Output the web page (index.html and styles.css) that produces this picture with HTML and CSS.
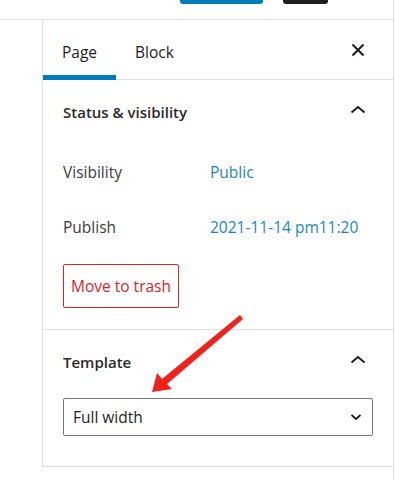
FILE: index.html
```html
<!DOCTYPE html>
<html lang="en">
<head>
  <meta charset="UTF-8">
  <meta name="viewport" content="width=device-width, initial-scale=1.0">
  <title>Page settings</title>
  <link rel="stylesheet" href="styles.css">
</head>
<body>

  <div class="page">
    <header class="topbar">
      <span class="top-btn primary"></span>
      <span class="top-btn dark"></span>
    </header>

    <div class="main">
      <div class="gutter"></div>

      <aside class="sidebar">
        <div class="tabs">
          <button class="tab active">Page</button>
          <button class="tab">Block</button>
          <button class="icon-btn close" aria-label="Close settings">
            <svg width="14" height="14" viewBox="0 0 14 14">
              <path d="M1.5 1.5 L12.5 12.5 M12.5 1.5 L1.5 12.5" stroke="#1e1e1e" stroke-width="2" fill="none"/>
            </svg>
          </button>
        </div>

        <section class="panel">
          <div class="panel-head">
            <h2>Status &amp; visibility</h2>
            <span class="chevron">
              <svg width="16" height="10" viewBox="0 0 16 10">
                <path d="M1.5 7.5 L8 2 L14.5 7.5" stroke="#1e1e1e" stroke-width="2" fill="none"/>
              </svg>
            </span>
          </div>
          <div class="panel-body status-body">
            <div class="row">
              <span class="row-label">Visibility</span>
              <a class="row-value" href="#">Public</a>
            </div>
            <div class="row">
              <span class="row-label">Publish</span>
              <a class="row-value" href="#">2021-11-14 pm11:20</a>
            </div>
            <button class="trash-btn">Move to trash</button>
          </div>
        </section>

        <section class="panel">
          <div class="panel-head">
            <h2>Template</h2>
            <span class="chevron">
              <svg width="16" height="10" viewBox="0 0 16 10">
                <path d="M1.5 7.5 L8 2 L14.5 7.5" stroke="#1e1e1e" stroke-width="2" fill="none"/>
              </svg>
            </span>
          </div>
          <div class="panel-body template-body">
            <div class="select">
              <span>Full width</span>
              <svg width="12" height="8" viewBox="0 0 12 8">
                <path d="M1.5 2 L6 6 L10.5 2" stroke="#1e1e1e" stroke-width="1.8" fill="none"/>
              </svg>
            </div>
          </div>
        </section>
      </aside>
    </div>

    <!-- red annotation arrow drawn over the screenshot -->
    <svg class="annotation" width="395" height="480" viewBox="0 0 395 480">
      <polygon points="152,392 157,373 162,379 240,315 243,319 167,384 172,389" fill="#f5201a"/>
    </svg>
  </div>

</body>
</html>
```

FILE: styles.css
```css
/* General body styling */
body {
  margin: 0;
  padding: 0;
  background: #fff;
  font-family: 'Open Sans', 'Noto Sans', sans-serif;
  color: #1e1e1e;
}

.page {
  position: relative;
  width: 393px;
  height: 480px;
  border-right: 1px solid #e0e0e0;
  overflow: hidden;
}

/* Top toolbar (cut off) */
.topbar {
  display: flex;
  gap: 20px;
  height: 19px;
  padding-left: 180px;
  border-bottom: 1px solid #e0e0e0;
}

.top-btn {
  display: block;
  height: 4px;
  border-radius: 0 0 3px 3px;
}

.top-btn.primary {
  width: 83px;
  background: #007cba;
}

.top-btn.dark {
  width: 45px;
  background: #1e1e1e;
}

.main {
  display: flex;
}

.gutter {
  width: 42px;
  flex-shrink: 0;
}

/* Sidebar */
.sidebar {
  flex: 1;
  border-left: 1px solid #e0e0e0;
}

.tabs {
  display: flex;
  align-items: stretch;
  height: 60px;
  box-shadow: inset 0 -1px 0 #e0e0e0;
}

.tab {
  font-family: inherit;
  font-size: 15.5px;
  color: #1e1e1e;
  background: none;
  border: none;
  padding: 3px 19px 0;
  cursor: pointer;
}

.tab.active {
  box-shadow: inset 0 -5px 0 #007cba;
}

.icon-btn {
  background: none;
  border: none;
  padding: 0;
  cursor: pointer;
}

.close {
  display: flex;
  align-items: center;
  justify-content: center;
  width: 24px;
  margin-left: auto;
  margin-right: 23px;
}

.panel {
  border-bottom: 1px solid #e0e0e0;
}

.panel-head {
  display: flex;
  align-items: center;
  justify-content: space-between;
  height: 64px;
  padding: 0 23px 0 20px;
}

.panel-head h2 {
  margin: 0;
  font-size: 15px;
  font-weight: 600;
  line-height: 20px;
  color: #2a2a2a;
}

.chevron {
  display: flex;
  align-items: center;
  justify-content: center;
  width: 24px;
  height: 24px;
  margin-top: -4px;
}

.panel-body {
  padding: 0 20px;
}

.status-body {
  padding-top: 8px;
  padding-bottom: 21px;
}

.row {
  display: flex;
  align-items: center;
  height: 40px;
  margin-bottom: 15px;
  font-size: 15.5px;
}

.row-label {
  width: 147px;
  color: #3c3c3c;
}

.row-value {
  color: #1b86c3;
  text-decoration: none;
}

.trash-btn {
  display: block;
  margin-top: 17px;
  height: 44px;
  padding: 0 7px;
  font-family: inherit;
  font-size: 15.5px;
  color: #d42626;
  background: #fff;
  border: 1px solid #d42626;
  border-radius: 2px;
  cursor: pointer;
}

.template-body {
  padding-top: 4px;
  padding-bottom: 30px;
}

.select {
  display: flex;
  align-items: center;
  justify-content: space-between;
  height: 38px;
  box-sizing: border-box;
  padding: 0 10px 0 9px;
  border: 1px solid #757575;
  border-radius: 2px;
  font-size: 15.5px;
}

.annotation {
  position: absolute;
  top: 0;
  left: 0;
  pointer-events: none;
}
```
